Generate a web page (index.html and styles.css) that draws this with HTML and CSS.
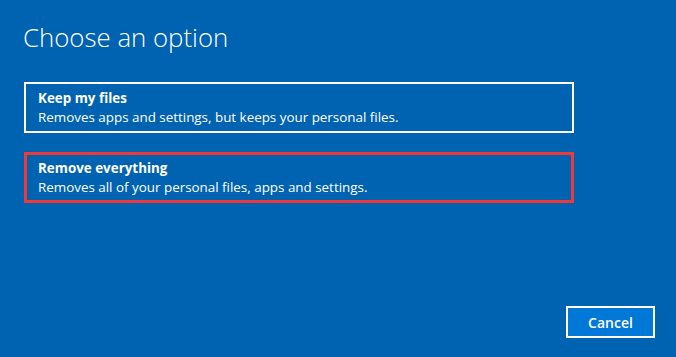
FILE: index.html
```html
<!DOCTYPE html>
<html>
<head>
<meta charset="utf-8">
<link rel="stylesheet" href="styles.css">
</head>
<body>
<div class="screen">
  <h1 class="title">Choose an option</h1>
  <div class="options">
    <div class="option">
      <div class="opt-title">Keep my files</div>
      <div class="opt-desc">Removes apps and settings, but keeps your personal files.</div>
    </div>
    <div class="option selected">
      <div class="opt-title">Remove everything</div>
      <div class="opt-desc">Removes all of your personal files, apps and settings.</div>
    </div>
  </div>
  <div class="footer">
    <button class="cancel">Cancel</button>
  </div>
</div>
</body>
</html>
```
FILE: styles.css
```css
html, body {
  margin: 0;
  padding: 0;
  background: #0063b1;
}
.screen {
  width: 676px;
  height: 357px;
  box-sizing: border-box;
  padding: 19px 0 0 24px;
  display: flex;
  flex-direction: column;
  font-family: "Open Sans", "Noto Sans", sans-serif;
  color: #fff;
}
.title {
  margin: 0 0 0 -1px;
  font-weight: 300;
  font-size: 25.8px;
  line-height: 36px;
}
.options {
  margin-top: 27px;
  display: flex;
  flex-direction: column;
  gap: 19px;
  width: 550px;
}
.option {
  border: 2px solid #fff;
  height: 51px;
  box-sizing: border-box;
  padding: 5px 0 0 12px;
}
.option.selected {
  border: 3px solid #f0393a;
  padding: 4px 0 0 11px;
}
.opt-title {
  font-weight: 700;
  font-size: 13.4px;
  line-height: 19px;
}
.opt-desc {
  font-size: 13.4px;
  line-height: 19px;
}
.footer {
  margin-top: auto;
  margin-bottom: 19px;
  display: flex;
  justify-content: flex-end;
  padding-right: 21px;
}
.cancel {
  width: 89px;
  height: 32px;
  background: #0078d7;
  border: 2px solid #fff;
  color: #fff;
  font-family: "Open Sans", "Noto Sans", sans-serif;
  font-weight: 600;
  font-size: 14px;
  padding: 0;
}
```
